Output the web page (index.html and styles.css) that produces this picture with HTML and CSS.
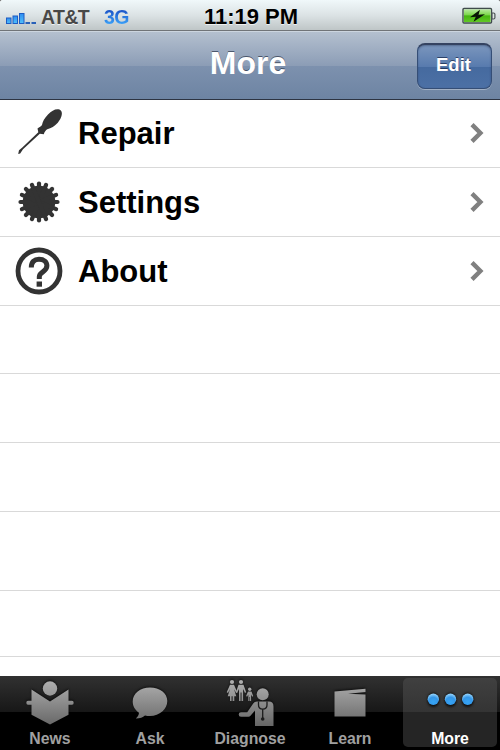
FILE: index.html
```html
<!DOCTYPE html>
<html lang="en">
<head>
    <meta charset="UTF-8">
    <meta name="viewport" content="width=device-width, initial-scale=1.0">
    <title>More</title>
    <link rel="stylesheet" href="styles.css">
</head>
<body>
    <div class="status-bar">
        <div class="carrier">
            <svg class="signal" width="30" height="12" viewBox="0 0 30 12">
                <defs>
                    <linearGradient id="bars" x1="0" y1="0" x2="0" y2="1">
                        <stop offset="0" stop-color="#2f8df0"/>
                        <stop offset="1" stop-color="#4fc0fa"/>
                    </linearGradient>
                </defs>
                <rect x="0.5" y="5" width="4.500" height="5.500" fill="url(#bars)" stroke="#1d5cc4"/>
                <rect x="7" y="3" width="4.500" height="7.500" fill="url(#bars)" stroke="#1d5cc4"/>
                <rect x="13.5" y="0.5" width="4.500" height="10" fill="url(#bars)" stroke="#1d5cc4"/>
                <rect x="19.500" y="9" width="4.500" height="2" fill="#2860b8"/>
                <rect x="25.500" y="9" width="4.500" height="2" fill="#2860b8"/>
            </svg>
            <span class="operator">AT&amp;T</span>
            <span class="network">3G</span>
        </div>
        <div class="time">11:19 PM</div>
        <svg class="battery" width="34" height="18" viewBox="0 0 34 18">
            <defs>
                <linearGradient id="charge" x1="0" y1="0" x2="0" y2="1">
                    <stop offset="0" stop-color="#b5ea9c"/>
                    <stop offset="0.45" stop-color="#7ad648"/>
                    <stop offset="0.5" stop-color="#45b510"/>
                    <stop offset="1" stop-color="#62c925"/>
                </linearGradient>
            </defs>
            <rect x="1" y="1.5" width="28.5" height="14.500" rx="1" fill="#e9f5e6" stroke="#3f4b4b" stroke-width="1.4"/>
            <rect x="2" y="2.500" width="26.500" height="12.500" fill="url(#charge)"/>
            <path d="M30 6h1.500q1.400 0 1.400 1.200v3.600q0 1.200-1.400 1.200H30z" fill="#dfe5e5" stroke="#4c5656" stroke-width="1.2"/>
            <path d="M18 2.800 8 10.200l5.800-.4-2.300 5L23 7.200l-6.500.5z" fill="#081505"/>
        </svg>
    </div>

    <div class="nav-bar">
        <h1>More</h1>
        <button class="edit-button">Edit</button>
    </div>

    <ul class="list">
        <li>
            <svg class="icon" width="50" height="50" viewBox="0 0 50 50">
                <path d="M45.500 1.500C41.500.500 38 2.500 34 6.500c-3.500 3.500-5.500 7-6 10.500-1 1.500-2.500 2.200-4.500 3.500l.8 3.700L8.300 39.500 5 42.200 4.200 46l2-.4 2.800-4.400 16.800-15.500 4 .5c.7-2.500 2-4 3.500-5 3.700-.8 7.500-3.200 10.500-6.500 4-4.700 6-11.200 1.700-13.200z" fill="#333"/>
            </svg>
            <span class="label">Repair</span>
            <svg class="arrow" width="14" height="20" viewBox="0 0 14 20"><path d="M2 1.600 10.400 10 2 18.400" fill="none" stroke="#808080" stroke-width="4.400"/></svg>
        </li>
        <li>
            <svg class="icon" width="50" height="50" viewBox="0 0 50 50">
                <circle cx="25" cy="25" r="16.300" fill="#333"/>
                <g class="teeth">
                    <path d="M25 6.500v37"/>
                    <path d="M25 6.500v37" transform="rotate(22.500 25 25)"/>
                    <path d="M25 6.500v37" transform="rotate(45 25 25)"/>
                    <path d="M25 6.500v37" transform="rotate(67.500 25 25)"/>
                    <path d="M25 6.500v37" transform="rotate(90 25 25)"/>
                    <path d="M25 6.500v37" transform="rotate(112.500 25 25)"/>
                    <path d="M25 6.500v37" transform="rotate(135 25 25)"/>
                    <path d="M25 6.500v37" transform="rotate(157.500 25 25)"/>
                </g>
            </svg>
            <span class="label">Settings</span>
            <svg class="arrow" width="14" height="20" viewBox="0 0 14 20"><path d="M2 1.600 10.400 10 2 18.400" fill="none" stroke="#808080" stroke-width="4.400"/></svg>
        </li>
        <li>
            <svg class="icon" width="50" height="50" viewBox="0 0 50 50">
                <circle cx="25" cy="25" r="21" fill="none" stroke="#333" stroke-width="4.800"/>
                <path d="M17.300 21.400c0-5.400 3-8.100 7.700-8.100 5 0 7.900 2.600 7.900 6.500 0 6.300-7.600 5.700-7.600 11v2.200" fill="none" stroke="#333" stroke-width="5"/>
                <rect x="22.600" y="35.500" width="5.400" height="5.200" fill="#333"/>
            </svg>
            <span class="label">About</span>
            <svg class="arrow" width="14" height="20" viewBox="0 0 14 20"><path d="M2 1.600 10.400 10 2 18.400" fill="none" stroke="#808080" stroke-width="4.400"/></svg>
        </li>
        <li></li>
        <li></li>
        <li></li>
        <li class="tall"></li>
        <li class="short"></li>
    </ul>

    <div class="tab-bar">
        <div class="tab">
            <svg width="80" height="52" viewBox="0 0 80 52">
                <defs>
                    <linearGradient id="gray" gradientUnits="userSpaceOnUse" x1="0" y1="3" x2="0" y2="50">
                        <stop offset="0" stop-color="#b2b2b2"/>
                        <stop offset="1" stop-color="#666"/>
                    </linearGradient>
                </defs>
                <g fill="url(#gray)">
                    <circle cx="40" cy="12.500" r="7.200"/>
                    <path d="M21.500 13.500 40 25.500l18.500-12v11.300h3.500q1.700 0 1.700 2t-1.700 2h-3.500v10L40 48.500l-18.500-9.700v-10H18q-1.700 0-1.700-2t1.700-2h3.500z"/>
                </g>
            </svg>
            <span>News</span>
        </div>
        <div class="tab">
            <svg width="80" height="52" viewBox="0 0 80 52">
                <path d="M40 11.500c9.700 0 17.300 5.700 17.300 13.500S49.700 40 40 40c-1.800 0-3.500-.2-5-.6-2.200 2-5.300 3.100-9.200 3 1.800-1.300 3-3.300 3.200-5.600-3.800-2.600-6.300-6.600-6.300-11.300C22.700 17.500 30.300 11.500 40 11.500z" fill="url(#gray)"/>
            </svg>
            <span>Ask</span>
        </div>
        <div class="tab">
            <svg width="80" height="52" viewBox="0 0 80 52">
                <g fill="url(#gray)">
                    <!-- family -->
                    <circle cx="22" cy="6" r="2.100"/>
                    <path d="M20 8.700h4l3.300 7.500-1.200.8-2.100-4 2.300 7.300h-2V25h-1.700v-4.700h-1V25H20v-4.700h-2.300L20 13l-2 4-1.300-.8z"/>
                    <circle cx="31" cy="6" r="2.100"/>
                    <path d="M28.500 8.700h5l2.700 7.500-1.200.8-1.900-4V25h-1.600v-8.500h-.9V25H29V13l-1.900 4-1.200-.8z"/>
                    <circle cx="39.700" cy="13.300" r="1.700"/>
                    <path d="M38 15.400h3.500l1.700 4.700-1 .6-1.100-2.300V25h-1.200v-4h-.5v4h-1.100v-6.600l-1.200 2.300-1-.6z"/>
                    <!-- doctor -->
                    <circle cx="52.700" cy="18.200" r="6"/>
                    <path d="M47 25.500h12q4.500 0 4.500 5V50H45V34.500l-4.500 5.300q-.8.900-2 .9H31q-2.300 0-2.300-2.200T31 36.300h6.200l6-8.800q1.300-2 3.800-2z"/>
                </g>
                <path d="M48.500 25.500v3.500c0 5.500 8.500 5.500 8.500 0v-3.500M52.700 33.500v9" fill="none" stroke="#1c1c1c" stroke-width="1.300"/>
                <circle cx="52.700" cy="43" r="1.800" fill="#1c1c1c"/>
            </svg>
            <span>Diagnose</span>
        </div>
        <div class="tab">
            <svg width="80" height="52" viewBox="0 0 80 52">
                <path d="M24.500 15.500 55.500 12.700v3.300L38 17.800l17.500.7V40.500h-31z" fill="url(#gray)"/>
            </svg>
            <span>Learn</span>
        </div>
        <div class="tab active">
            <svg width="80" height="52" viewBox="0 0 80 52">
                <defs>
                    <radialGradient id="dot" cx="0.5" cy="0.75" r="0.7">
                        <stop offset="0" stop-color="#35a4f5"/>
                        <stop offset="0.6" stop-color="#3597e8"/>
                        <stop offset="1" stop-color="#8fd0fb"/>
                    </radialGradient>
                </defs>
                <g class="dots" fill="url(#dot)">
                    <circle cx="23.300" cy="23.200" r="5.700"/>
                    <circle cx="40.500" cy="23.200" r="5.700"/>
                    <circle cx="57.700" cy="23.200" r="5.700"/>
                </g>
            </svg>
            <span>More</span>
        </div>
    </div>
</body>
</html>
```
FILE: styles.css
```css
body {
    margin: 0;
    width: 500px;
    height: 750px;
    overflow: hidden;
    display: flex;
    flex-direction: column;
    background: #fff;
    font-family: "Liberation Sans", Arial, sans-serif;
    font-weight: bold;
}
.status-bar {
    height: 31px;
    box-sizing: border-box;
    flex: none;
    display: grid;
    grid-template-columns: 1fr auto 1fr;
    align-items: center;
    padding: 0 4px 0 6px;
    background: linear-gradient(#f0f8fa, #dce3e5 50%, #bfc6c7);
    border-bottom: 1px solid #707478;
    border-radius: 3px 3px 0 0;
    box-shadow: 0 -4px 0 4px #666;
}
.carrier {
    display: flex;
    align-items: center;
    font-size: 19.5px;
    line-height: 30px;
    text-shadow: 0 1px 0 rgba(255, 255, 255, 0.7);
}
.signal {
    margin: 5px 5px 0 0;
}
.operator {
    width: 63px;
    padding-top: 2px;
    letter-spacing: -0.6px;
    color: #484848;
}
.network {
    padding-top: 2px;
    letter-spacing: -0.5px;
    color: #2468dc;
    background: linear-gradient(#1648c0 25%, #3aa0f8 75%);
    background-clip: text;
    -webkit-background-clip: text;
    -webkit-text-fill-color: transparent;
    text-shadow: none;
}
.time {
    padding-top: 1px;
    font-size: 22px;
    line-height: 29px;
    color: #000;
    text-shadow: 0 1px 0 rgba(255, 255, 255, 0.7);
}
.battery {
    justify-self: end;
}
.nav-bar {
    height: 69px;
    box-sizing: border-box;
    flex: none;
    display: grid;
    grid-template-columns: 1fr auto 1fr;
    align-items: center;
    padding: 0 8px 0 4px;
    background: linear-gradient(#b4c0cf, #8c9db6 50%, #7d91ae 51%, #6d84a3);
    border-top: 1px solid #ccd5df;
    border-bottom: 1px solid #2d3442;
}
.nav-bar h1 {
    grid-column: 2;
    margin: 0;
    padding-bottom: 5px;
    font-size: 32px;
    line-height: 36px;
    color: #fff;
    text-shadow: 0 -1px 0 rgba(40, 50, 70, 0.7);
}
.edit-button {
    justify-self: end;
    width: 75px;
    height: 46px;
    padding: 0 2px 3px 0;
    font: bold 18.5px "Liberation Sans", Arial, sans-serif;
    color: #fff;
    text-shadow: 0 -1px 0 rgba(20, 35, 70, 0.7);
    background: linear-gradient(#7b96bd, #587bae 50%, #456a9f 51%, #4c70a5);
    border: 1px solid #354e76;
    border-top: 2px solid #354361;
    border-radius: 8px;
    box-shadow: 0 1px 0 rgba(255, 255, 255, 0.35), inset 0 1px 2px rgba(30, 45, 80, 0.4);
}
.list {
    list-style: none;
    flex: 1;
    min-height: 0;
    margin: -0.6px 0 0;
    padding: 0;
}
.list li {
    height: 68.75px;
    box-sizing: border-box;
    display: flex;
    align-items: center;
    padding: 0 16px 0 14px;
    border-bottom: 1px solid #d9d9d9;
}
.list li.tall {
    height: 79px;
}
.list li.short {
    height: 66px;
}
.icon {
    margin-right: 14px;
}
.teeth {
    fill: none;
    stroke: #333;
    stroke-width: 4.200px;
    stroke-linecap: round;
}
.label {
    flex: 1;
    padding-top: 2px;
    font-size: 31px;
    line-height: 36px;
    color: #000;
}
.tab-bar {
    height: 74px;
    box-sizing: border-box;
    flex: none;
    display: flex;
    padding: 2px 0 3px;
    background: linear-gradient(#313131, #171717 36px, #000 36px);
}
.tab {
    flex: 1;
    display: flex;
    flex-direction: column;
    align-items: center;
    font-size: 15.8px;
    color: #a0a0a0;
}
.tab svg {
    margin-top: -2px;
    flex: none;
    filter: drop-shadow(0 -1px 1px rgba(0, 0, 0, 0.6));
}
.tab span {
    margin-top: 2px;
    line-height: 18px;
}
.tab.active {
    flex: 0 0 94px;
    margin: 0 3px;
    border-radius: 5px;
    background: linear-gradient(#404040, #343434 34px, #252525 34px);
    color: #fff;
}
.dots {
    filter: drop-shadow(0 2px 1px rgba(0, 0, 0, 0.6));
}
```
